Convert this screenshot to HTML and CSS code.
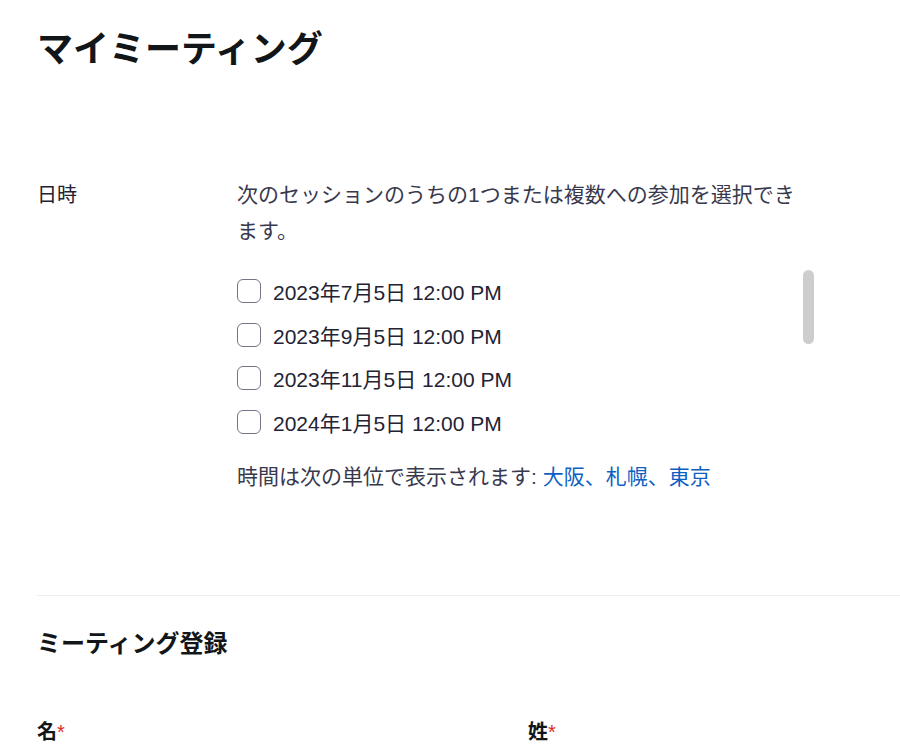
FILE: index.html
```html
<!DOCTYPE html>
<html lang="ja">
<head>
<meta charset="utf-8">
<title>マイミーティング</title>
<link rel="stylesheet" href="styles.css">
</head>
<body>
<main class="page">
  <h1 class="title">マイミーティング</h1>

  <section class="info-row">
    <div class="info-label">日時</div>
    <div class="info-body">
      <p class="desc">次のセッションのうちの1つまたは複数への参加を選択できます。</p>
      <div class="sessions">
        <label class="session"><span class="box"></span><span class="session-text">2023年7月5日 12:00 PM</span></label>
        <label class="session"><span class="box"></span><span class="session-text">2023年9月5日 12:00 PM</span></label>
        <label class="session"><span class="box"></span><span class="session-text">2023年11月5日 12:00 PM</span></label>
        <label class="session"><span class="box"></span><span class="session-text">2024年1月5日 12:00 PM</span></label>
        <div class="scroll-thumb"></div>
      </div>
      <p class="tz">時間は次の単位で表示されます: <a class="tz-link" href="#">大阪、札幌、東京</a></p>
    </div>
  </section>

  <hr class="divider">

  <h2 class="reg-title">ミーティング登録</h2>

  <div class="fields">
    <div class="field-label">名<span class="req">*</span></div>
    <div class="field-label">姓<span class="req">*</span></div>
  </div>
</main>
</body>
</html>
```

FILE: styles.css
```css
html, body {
  margin: 0;
  padding: 0;
  background: #ffffff;
  overflow: hidden;
}

body {
  font-family: "Liberation Sans", "Noto Sans CJK JP", sans-serif;
  color: #232333;
}

.page {
  padding: 0 0 0 37px;
}

.title {
  margin: 0;
  padding-top: 26px;
  font-size: 36px;
  line-height: 48px;
  font-weight: 700;
  color: #131619;
}

.info-row {
  display: grid;
  grid-template-columns: 200px 580px;
  margin-top: 103px;
}

.info-label {
  font-size: 20px;
  line-height: 36px;
  color: #232333;
}

.desc {
  margin: 0;
  font-size: 21px;
  line-height: 36px;
  color: #39394d;
  width: 565px;
}

.sessions {
  position: relative;
  margin-top: 30px;
  display: flex;
  flex-direction: column;
  gap: 19.7px;
}

.session {
  display: flex;
  align-items: center;
  gap: 12px;
  height: 24px;
}

.box {
  width: 22px;
  height: 22px;
  border: 1px solid #747487;
  border-radius: 6px;
  flex: none;
}

.session-text {
  font-size: 21px;
  color: #232333;
}

.scroll-thumb {
  position: absolute;
  left: 566px;
  top: -9px;
  width: 11px;
  height: 74px;
  border-radius: 6px;
  background: #cdcdcd;
}

.tz {
  margin: 25px 0 0;
  font-size: 21px;
  line-height: 36px;
  color: #39394d;
}

.tz-link {
  color: #0e5fc4;
  text-decoration: none;
}

.divider {
  margin: 100px 0 0;
  border: 0;
  border-top: 1px solid #ededf4;
}

.reg-title {
  margin: 30px 0 0;
  font-size: 24px;
  line-height: 36px;
  font-weight: 700;
  color: #131619;
}

.fields {
  display: grid;
  grid-template-columns: 471px 1fr;
  column-gap: 20px;
  margin-top: 54px;
}

.field-label {
  font-size: 20px;
  line-height: 32px;
  font-weight: 700;
  color: #131619;
}

.req {
  color: #de2828;
  font-weight: 400;
}
```
